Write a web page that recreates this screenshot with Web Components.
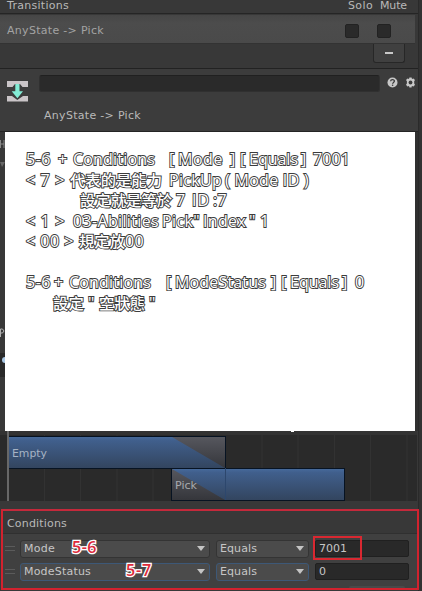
<!DOCTYPE html>
<html lang="zh-Hant"><head><meta charset="utf-8"><title>Transition inspector</title>
<style>html,body{margin:0;height:591px;overflow:hidden;background:#383838}body{font:11px/14px "DejaVu Sans",sans-serif;color:#b9b9b9}</style></head><body>
<transition-inspector></transition-inspector>
<script>
const define=(name,html,setup)=>customElements.define(name,class extends HTMLElement{
 connectedCallback(){if(this.shadowRoot)return;const t=document.createElement('template');t.innerHTML=html;
 this.attachShadow({mode:'open'}).append(t.content.cloneNode(true));if(setup)setup(this,this.shadowRoot);}
});
// Text whose letter spacing is adjusted to fill a given width.
define('fit-text',`<style>:host{display:block;white-space:pre;flex:none}span{display:inline-block}</style><span></span>`,(el,root)=>{
 const s=root.querySelector('span'),w=+el.getAttribute('w');s.textContent=el.getAttribute('text');
 el.style.width=w+'px';const n=[...s.textContent].length;
 const natural=s.getBoundingClientRect().width;
 s.style.letterSpacing=((w-natural)/n)+'px';
});
define('note-panel',`<style>
:host{display:block;box-sizing:border-box;width:410px;height:299px;margin-left:5px;padding-top:17px;background:#fff;color:#fff;
font:16px/20.5px "Open Sans","Noto Sans CJK TC",sans-serif;-webkit-text-stroke:1.9px #3c3c3c;paint-order:stroke fill}
.line{display:flex;height:20.5px}.cjk{font-size:15.3px;font-weight:500}</style><div id="lines"></div>`,(el,root)=>{
 const lines=[
 [['5-6',26,51],['+',58,69],['Conditions',73,155],['[',169,175],['Mode',178,223],[']',230,235],['[',240,246],['Equals',249,298],[']',301,306],['7001',313,350]],
 [['< 7 >',26,65],['代表的是能力',70,162],['PickUp',169,222],['( Mode ID )',225,309]],
 [['設定就是等於',80,172],['7',176,185],['ID',192,210],[':7',213,227]],
 [['< 1 >',26,65],['03-Abilities',73,159],['Pick"',162,200],['Index',203,246],['"',249,257],['1',260,269]],
 [['< 00 >',26,74],['規定放',79,125],['00',125,144]],
 [],
 [['5-6',26,51],['+',54,65],['Conditions',69,151],['[',166,172],['ModeStatus',175,266],[']',271,277],['[',281,287],['Equals',290,339],[']',342,347],['0',355,365]],
 [['設定',53,84],['"',88,95],['空狀態',99,145],['"',149,156]]];
 for(const parts of lines){const line=document.createElement('div');line.className='line';let end=5;
 for(const [text,a,b] of parts){const f=document.createElement('fit-text');f.setAttribute('text',text);f.setAttribute('w',b-a);f.style.marginLeft=(a-end)+'px';if(text.charCodeAt(0)>0x2fff)f.className='cjk';line.append(f);end=b;}
 root.getElementById('lines').append(line);}
});
define('check-box',`<style>:host{display:block;box-sizing:border-box;width:14px;height:14px;background:#2a2a2a;border:1px solid #222;border-radius:2px}</style>`);
define('transition-list',`<style>:host{display:block;height:69px;background:#383838}
.head{display:flex;height:13px;padding-left:7px;border-bottom:1px solid #252525;line-height:12px}
.row{box-sizing:border-box;display:flex;align-items:center;width:415px;height:29px;padding:3px 0 0 7px;margin-top:1px;background:linear-gradient(#464646,#4c4c4c 30%,#4a4a4a);border-bottom:1px solid #333}
.foot{display:flex;height:24px;border-bottom:1px solid #222}
.minus{box-sizing:border-box;width:32px;height:19px;margin:0 0 0 373px;border:1px solid #272727;border-top:0;border-radius:0 0 3px 3px;background:#404040;display:flex;justify-content:center;padding-top:8px}
.minus i{width:8px;height:2px;background:#c8c8c8}</style>
<div class="head"><fit-text text="Transitions" w="62"></fit-text><fit-text text="Solo" w="25" style="margin-left:279px"></fit-text><fit-text text="Mute" w="27" style="margin-left:7px"></fit-text></div>
<div class="row"><fit-text text="AnyState -> Pick" w="97" style="color:#a3a3a3;padding-top:1px"></fit-text><check-box style="margin-left:241px"></check-box><check-box style="margin-left:18px"></check-box></div>
<div class="foot"><div class="minus"><i></i></div></div>`);
define('transition-title',`<style>:host{display:block;box-sizing:border-box;height:63px;background:#3c3c3c;border-bottom:1px solid #242424}
.top{display:flex;height:38px;padding:6px 0 0 7px;box-sizing:border-box}.field{box-sizing:border-box;width:341px;height:17px;margin-left:11px;background:#2a2a2a;border:1px solid #303030;border-top-color:#202020;border-radius:3px}
.arrow{margin-top:5px}.help{margin:2px 0 0 7px}.gear{margin:2px 0 0 7px}fit-text{margin:2px 0 0 44px}</style>
<div class="top"><svg class="arrow" width="21" height="22" viewBox="0 0 21 22"><path d="M0 1h21v6h-5.500L13 4H8L5.500 7H0zM0 16h5l5.300 4L16 16h5v5.500H0z" fill="#cac5c8"/><path d="M8.300 4h4.200v7.200H16l-5.600 7-5.700-7h3.600z" fill="#83ecd5"/></svg>
<div class="field"></div>
<svg class="help" width="11" height="11" viewBox="0 0 11 11"><circle cx="5.500" cy="5.500" r="5" fill="#c8c8c8"/><path d="M3.600 4.300C3.700 2 7.400 2 7.400 4.100c0 1.300-1.800 1.300-1.800 2.700" fill="none" stroke="#393939" stroke-width="1.250"/><circle cx="5.600" cy="8.300" r=".8" fill="#393939"/></svg>
<svg class="gear" width="11" height="11" viewBox="0 0 11 11"><path d="M4.400.4h2.200l.4 1.500 1.500-.5 1.500 1.700-.8 1.100V6.600l.8 1.200-1.400 1.800-1.700-.5-.4 1.500H4.400L4 9.100l-1.600.5L1 7.800l.9-1.200V4.300L1 3.100l1.500-1.700 1.500.5z" fill="#c8c8c8"/><circle cx="5.500" cy="5.500" r="1.900" fill="#3c3c3c"/></svg></div>
<fit-text text="AnyState -> Pick" w="97"></fit-text>`);
define('blend-timeline',`<style>:host{display:block;height:78px}svg{display:block;font:11px "DejaVu Sans",sans-serif}</style>
<svg width="422" height="78" viewBox="0 0 422 78"><defs>
<linearGradient id="b" x1="0" y1="0" x2="0" y2="1"><stop stop-color="#46699a"/><stop offset=".12" stop-color="#405f8c"/><stop offset="1" stop-color="#33455f"/></linearGradient>
<linearGradient id="g" x1="0" y1="0" x2="0" y2="1"><stop stop-color="#56575e"/><stop offset="1" stop-color="#35363b"/></linearGradient></defs>
<path d="M0 0h422v78H0z" fill="#383838"/><path d="M0 4h417v66H0z" fill="#2a2a2a"/><path d="M0 0h417v4H0z" fill="#333"/>
<path d="M44.500 4v66M80.500 4v66M117 4v66M153 4v66M262 4v66M298 4v66M334.500 4v66M370.500 4v66M407 4v66" stroke="#323232"/>
<path d="M7 0h2v70H7z" fill="#686868"/>
<path d="M9 5h217v33H9z" fill="#071322"/><path d="M9 6h216v31H9z" fill="url(#b)"/><path d="M172 6h53v31z" fill="url(#g)"/>
<path d="M171 37h174v33H171z" fill="#071322"/><path d="M172 38h172v31H172z" fill="url(#b)"/><path d="M172 38l53 31h-53z" fill="url(#g)"/><path d="M225.500 37v32" stroke="#2d476d"/>
<text x="12" y="26" fill="#a6b3c4" textLength="35" lengthAdjust="spacingAndGlyphs">Empty</text><text x="175" y="58" fill="#a6aaaf" textLength="22" lengthAdjust="spacingAndGlyphs">Pick</text>
<path d="M291 0h3v1h-3z" fill="#fff"/></svg>`);
define('drop-down',`<style>:host{box-sizing:border-box;display:flex;align-items:center;height:18px;padding:0 4px 0 3px;background:#4b4b4b;border:1px solid #343434;border-radius:3px;color:#c6c6c6}
:host([focus]){border-color:#3d5877}i{margin-left:auto;border:4px solid transparent;border-top:5px solid #c4c4c4;border-bottom:0}</style><slot></slot><i></i>`);
define('value-field',`<style>:host{box-sizing:border-box;display:flex;align-items:center;height:17px;width:94px;padding-left:3px;background:#292929;border:1px solid #202020;border-radius:2px;color:#c6c6c6}</style><slot></slot>`);
define('drag-handle',`<style>:host{display:block;box-sizing:border-box;width:10px;height:5px;border:solid #5b5b5b;border-width:1px 0}</style>`);
define('step-badge',`<style>:host{position:absolute;font:600 16px/20px "Open Sans",sans-serif;color:#dd2a3b;-webkit-text-stroke:2.6px #fff;paint-order:stroke fill}</style><slot></slot>`);
define('condition-list',`<style>:host{position:relative;display:block;box-sizing:border-box;width:418px;height:81px;margin-left:1px;border:2px solid #d2222e;border-top-color:#c4293b;background:#383838}
.title{height:22px;padding:6px 0 0 4px;box-sizing:border-box}.rows{height:55px;background:#404040;border-top:1px solid #303030;box-sizing:border-box;padding-top:3px}
.row{display:flex;align-items:center;height:23px;padding-left:2px}.param{width:190px;margin-left:5px}.op{width:93px;margin-left:6px}value-field{margin-left:6px}
.mark{position:absolute;left:310px;top:25px;width:49px;height:24px;box-sizing:border-box;border:2px solid #d92831}
.add{position:absolute;left:346px;top:75px;width:56px;height:2px;background:#4a4a4a;border-radius:3px 3px 0 0}</style>
<div class="title"><fit-text text="Conditions" w="60"></fit-text></div>
<div class="rows"><div class="row"><drag-handle></drag-handle><drop-down class="param"><fit-text text="Mode" w="31"></fit-text></drop-down><drop-down class="op"><fit-text text="Equals" w="37"></fit-text></drop-down><value-field><fit-text text="7001" w="28"></fit-text></value-field></div>
<div class="row"><drag-handle></drag-handle><drop-down focus class="param"><fit-text text="ModeStatus" w="67"></fit-text></drop-down><drop-down focus class="op"><fit-text text="Equals" w="37"></fit-text></drop-down><value-field><fit-text text="0" w="7"></fit-text></value-field></div></div>
<div class="add"></div><div class="mark"></div><step-badge style="left:69px;top:26px"><fit-text text="5-6" w="25"></fit-text></step-badge><step-badge style="left:123px;top:49px"><fit-text text="5-7" w="26"></fit-text></step-badge>`);
define('transition-inspector',`<style>:host{position:relative;display:block;width:422px;height:591px;overflow:hidden;background:#383838}
.notes{height:299px;background:linear-gradient(90deg,#383838 415px,#303030 415px 418px,#353535 418px)}
.edge{position:absolute;right:0;top:0;width:4px;height:100%;background:#323232;border-left:1px solid #2a2a2a;box-sizing:border-box}
.peek{position:absolute;left:0;top:132px;pointer-events:none}</style>
<transition-list></transition-list><transition-title></transition-title><div class="notes"><note-panel></note-panel></div><blend-timeline></blend-timeline>
<div class="edge"></div><condition-list></condition-list>
<svg class="peek" width="5" height="299" viewBox="0 0 5 299"><path d="M.500 8v8M4 8v8M0 12h4" stroke="#888"/><path d="M0 30h5l-3 5z" fill="#666"/><path d="M.500 205v-8h2q3 2 0 4H1" fill="none" stroke="#b0b0b0"/><path d="M0 221h5v24H0z" fill="#292929"/><circle cx="5" cy="228" r="3" fill="#a9c7e4"/></svg>`);
</script></body></html>
